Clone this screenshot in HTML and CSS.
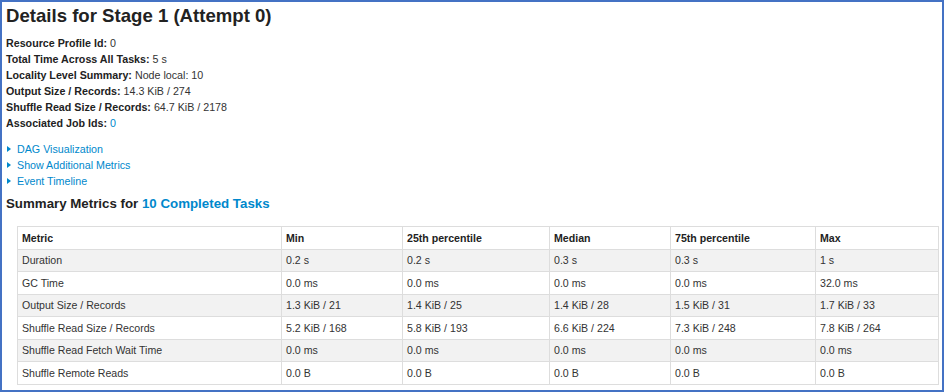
FILE: index.html
```html
<!DOCTYPE html>
<html>
<head>
    <title>Details for Stage 1 (Attempt 0)</title>
    <link rel="stylesheet" href="styles.css">
</head>
<body>
    <div class="frame">
        <h3 class="page-title">Details for Stage 1 (Attempt 0)</h3>

        <ul class="summary">
            <li><strong>Resource Profile Id:</strong> 0</li>
            <li><strong>Total Time Across All Tasks:</strong> 5 s</li>
            <li><strong>Locality Level Summary:</strong> Node local: 10</li>
            <li><strong>Output Size / Records:</strong> 14.3 KiB / 274</li>
            <li><strong>Shuffle Read Size / Records:</strong> 64.7 KiB / 2178</li>
            <li><strong>Associated Job Ids:</strong> <a href="#">0</a></li>
        </ul>

        <ul class="toggles">
            <li><span class="arrow"></span><a href="#">DAG Visualization</a></li>
            <li><span class="arrow"></span><a href="#">Show Additional Metrics</a></li>
            <li><span class="arrow"></span><a href="#">Event Timeline</a></li>
        </ul>

        <h4 class="section-title">Summary Metrics for <a href="#">10 Completed Tasks</a></h4>

        <table class="metrics">
            <colgroup>
                <col class="c-metric">
                <col class="c-min">
                <col class="c-p25">
                <col class="c-med">
                <col class="c-p75">
                <col class="c-max">
            </colgroup>
            <thead>
                <tr>
                    <th>Metric</th>
                    <th>Min</th>
                    <th>25th percentile</th>
                    <th>Median</th>
                    <th>75th percentile</th>
                    <th>Max</th>
                </tr>
            </thead>
            <tbody>
                <tr><td>Duration</td><td>0.2 s</td><td>0.2 s</td><td>0.3 s</td><td>0.3 s</td><td>1 s</td></tr>
                <tr><td>GC Time</td><td>0.0 ms</td><td>0.0 ms</td><td>0.0 ms</td><td>0.0 ms</td><td>32.0 ms</td></tr>
                <tr><td>Output Size / Records</td><td>1.3 KiB / 21</td><td>1.4 KiB / 25</td><td>1.4 KiB / 28</td><td>1.5 KiB / 31</td><td>1.7 KiB / 33</td></tr>
                <tr><td>Shuffle Read Size / Records</td><td>5.2 KiB / 168</td><td>5.8 KiB / 193</td><td>6.6 KiB / 224</td><td>7.3 KiB / 248</td><td>7.8 KiB / 264</td></tr>
                <tr><td>Shuffle Read Fetch Wait Time</td><td>0.0 ms</td><td>0.0 ms</td><td>0.0 ms</td><td>0.0 ms</td><td>0.0 ms</td></tr>
                <tr><td>Shuffle Remote Reads</td><td>0.0 B</td><td>0.0 B</td><td>0.0 B</td><td>0.0 B</td><td>0.0 B</td></tr>
            </tbody>
        </table>
    </div>
</body>
</html>
```

FILE: styles.css
```css
html, body { margin: 0; padding: 0; background: #fff; }
body { font-family: "Liberation Sans", Arial, sans-serif; font-size: 10.7px; color: #333; }
a { color: #0088cc; text-decoration: none; }

.frame {
    width: 944px;
    height: 392px;
    box-sizing: border-box;
    border: 2px solid #4472c4;
    padding: 0 4px;
    overflow: hidden;
}

.page-title {
    margin: 1px 0 0;
    font-size: 18.6px;
    line-height: 26px;
    color: #222;
}

.summary { list-style: none; margin: 6px 0 0; padding: 0; }
.summary li { line-height: 16px; }
.summary strong { color: #222; }

.toggles { list-style: none; margin: 10px 0 0; padding: 0; }
.toggles li { line-height: 16px; display: flex; align-items: center; }
.arrow {
    width: 0;
    height: 0;
    border-top: 3px solid transparent;
    border-bottom: 3px solid transparent;
    border-left: 4px solid #0088cc;
    margin: 0 6px 0 1px;
}

.section-title {
    margin: 5px 0 0;
    font-size: 13.3px;
    line-height: 20px;
    color: #222;
}

.metrics {
    margin: 12px 0 0 11px;
    width: 921px;
    table-layout: fixed;
    border-collapse: collapse;
    border: 1px solid #ddd;
    font-size: 10.6px;
}
.c-metric { width: 264px; }
.c-min { width: 121px; }
.c-p25 { width: 147px; }
.c-med { width: 121px; }
.c-p75 { width: 145px; }
.c-max { width: 123px; }

.metrics th, .metrics td {
    height: 21.5px;
    padding: 0 4px;
    text-align: left;
    border: 1px solid #ddd;
    border-width: 1px 1px 0 1px;
    white-space: nowrap;
}
.metrics th { color: #222; font-weight: bold; }
.metrics tbody tr:nth-child(odd) td { background: #f2f2f2; }
```
